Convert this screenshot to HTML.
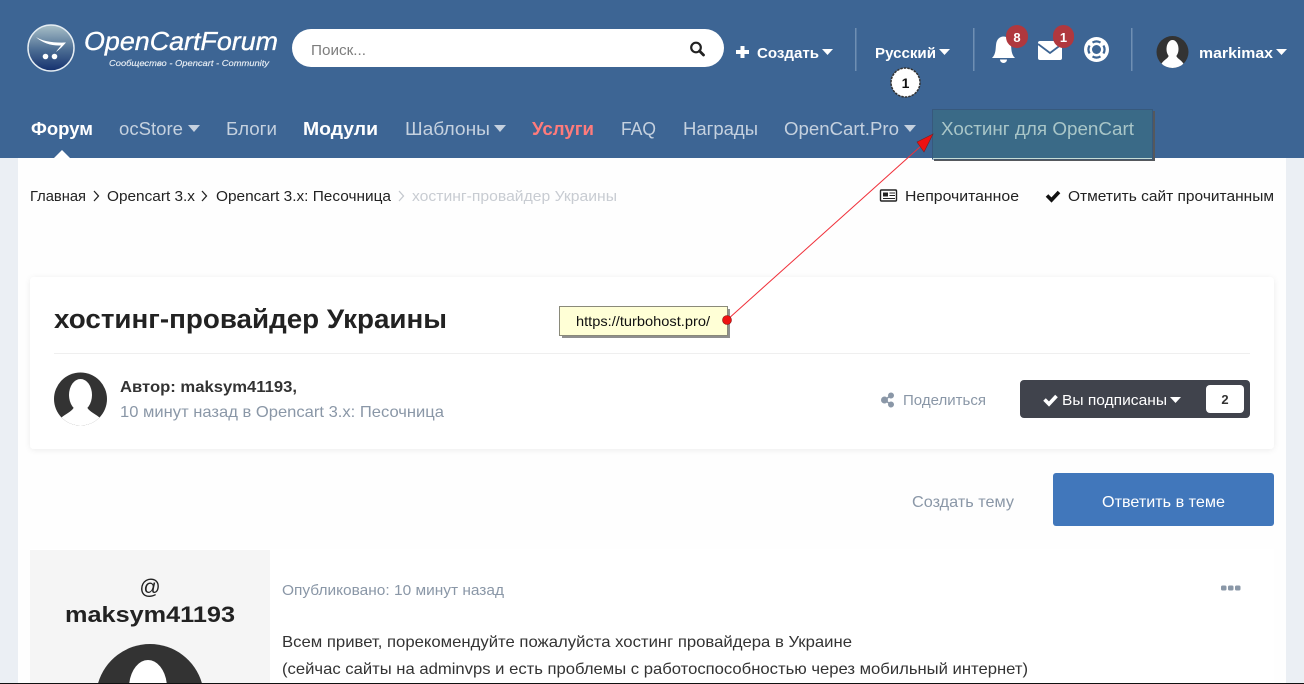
<!DOCTYPE html>
<html><head><meta charset="utf-8"><title>хостинг-провайдер Украины</title>
<style>
html,body{margin:0;padding:0;width:1304px;height:684px;overflow:hidden;background:#ebeff4}
svg{display:block}
text{font-family:"Liberation Sans","Noto Sans CJK SC",sans-serif}
</style></head><body>
<svg xmlns="http://www.w3.org/2000/svg" width="1304" height="684" viewBox="0 0 1304 684">
<defs>
<linearGradient id="g" x1="0" y1="0" x2="0" y2="1"><stop offset="0" stop-color="#a9c0c8"/><stop offset=".55" stop-color="#4a6b92"/><stop offset="1" stop-color="#14306e"/></linearGradient>
<filter id="s" x="-5%" y="-10%" width="110%" height="120%"><feDropShadow dx="0" dy="1" stdDeviation="3" flood-color="#000" flood-opacity=".07"/></filter>
<clipPath id="c1"><circle cx="80.500" cy="399" r="26.500"/></clipPath>
<clipPath id="c3"><circle cx="1172.500" cy="52" r="16"/></clipPath>
</defs>
<rect width="1304" height="684" fill="#ebeff4"/>
<rect x="18" y="158" width="1268" height="526" fill="#fefefe"/>
<rect y="0" width="1304" height="158" fill="#3d6594"/>

<!-- logo -->
<circle cx="51" cy="48" r="23" fill="url(#g)" stroke="#e4ecf2" stroke-width="1.500"/>
<path d="M36 37C42 41 52 43 66 42.500C63 46 60 49 56 52C58 49 60 47 61 45.500C52 46 42 43 36 37Z" fill="#fff"/>
<circle cx="45.500" cy="56.500" r="2.800" fill="#fff"/><circle cx="54.500" cy="56.500" r="2.800" fill="#fff"/>
<text x="84" y="50" font-size="26" font-style="italic" fill="#fff" stroke="#fff" stroke-width=".35" textLength="194" lengthAdjust="spacingAndGlyphs">OpenCartForum</text>
<text x="109" y="66" font-size="8.500" font-style="italic" fill="#e8eef4" stroke="#e8eef4" stroke-width=".15" textLength="160" lengthAdjust="spacingAndGlyphs">Сообщество - Opencart - Community</text>

<!-- search -->
<rect x="292" y="29" width="432" height="38" rx="19" fill="#fff"/>
<text x="311" y="55" font-size="15" fill="#7d7d7d" textLength="55" lengthAdjust="spacingAndGlyphs">Поиск...</text>
<circle cx="696" cy="47.500" r="4.800" fill="none" stroke="#222" stroke-width="2.200"/><path d="M699.500 51L703.500 55" stroke="#222" stroke-width="2.800" stroke-linecap="round"/>

<!-- top actions -->
<path d="M742.500 46V58M736 52H749" stroke="#fff" stroke-width="4"/>
<text x="757" y="58" font-size="15" font-weight="bold" fill="#fff" textLength="62" lengthAdjust="spacingAndGlyphs">Создать</text>
<path d="M822 49H833L827.500 55Z" fill="#fff"/>
<rect x="855" y="28" width="1.500" height="43" fill="#6f8fb3"/>
<text x="875" y="58" font-size="15" font-weight="bold" fill="#fff" textLength="61" lengthAdjust="spacingAndGlyphs">Русский</text>
<path d="M939 49H950L944.500 55Z" fill="#fff"/>
<rect x="973" y="28" width="1.500" height="43" fill="#6f8fb3"/>
<path d="M992 58C996 54 995.500 49 996 45C996.500 39 1000 36.500 1003.500 36.500C1007 36.500 1010.500 39 1011 45C1011.500 49 1011 54 1015 58Z" fill="#fff"/>
<path d="M1000 59.500a3.500 3.500 0 0 0 7 0Z" fill="#fff"/>
<rect x="1006" y="25" width="22" height="23" rx="11" fill="#b0383e"/>
<text x="1017" y="42" font-size="13" font-weight="bold" fill="#fff" text-anchor="middle">8</text>
<rect x="1038" y="41" width="24" height="19" rx="2" fill="#fff"/>
<path d="M1038 44L1050 53L1062 44" fill="none" stroke="#3d6594" stroke-width="1.800"/>
<rect x="1053" y="25" width="21" height="23" rx="10.500" fill="#b0383e"/>
<text x="1063.500" y="42" font-size="13" font-weight="bold" fill="#fff" text-anchor="middle">1</text>
<circle cx="1096.500" cy="49.500" r="12.500" fill="#fff"/>
<circle cx="1096.500" cy="49.500" r="4.500" fill="#3d6594"/>
<path d="M1092.500 42.570A8 8 0 0 1 1100.500 42.570M1103.430 45.500A8 8 0 0 1 1103.430 53.500M1100.500 56.430A8 8 0 0 1 1092.500 56.430M1089.570 53.500A8 8 0 0 1 1089.570 45.500" fill="none" stroke="#3d6594" stroke-width="2.200"/>
<rect x="1131" y="28" width="1.500" height="43" fill="#6f8fb3"/>
<circle cx="1172.500" cy="52" r="16" fill="#333"/>
<g clip-path="url(#c3)" fill="#fff"><ellipse cx="1172.500" cy="49" rx="6" ry="9"/><path d="M1160 70C1160 60 1168 60 1169 55H1176C1177 60 1185 60 1185 70Z"/></g>
<text x="1199" y="58" font-size="15" font-weight="bold" fill="#fff" textLength="74" lengthAdjust="spacingAndGlyphs">markimax</text>
<path d="M1276 49H1287L1281.500 55Z" fill="#fff"/>

<!-- step marker -->
<circle cx="905.500" cy="82.500" r="14.500" fill="#fff" stroke="#333" stroke-width="1.500" stroke-dasharray="2.500 1"/>
<text x="905.500" y="88" font-size="14" font-weight="bold" fill="#111" text-anchor="middle">1</text>

<!-- nav -->
<g font-size="18">
<text x="31" y="135" font-weight="bold" fill="#fff" textLength="62" lengthAdjust="spacingAndGlyphs">Форум</text>
<text x="119" y="135" fill="#c5d1df" textLength="64" lengthAdjust="spacingAndGlyphs">ocStore</text>
<path d="M188 125H200L194 132Z" fill="#c5d1df"/>
<text x="226" y="135" fill="#c5d1df" textLength="51" lengthAdjust="spacingAndGlyphs">Блоги</text>
<text x="303" y="135" font-weight="bold" fill="#fff" textLength="75" lengthAdjust="spacingAndGlyphs">Модули</text>
<text x="405" y="135" fill="#c5d1df" textLength="85" lengthAdjust="spacingAndGlyphs">Шаблоны</text>
<path d="M494 125H506L500 132Z" fill="#c5d1df"/>
<text x="532" y="135" font-weight="bold" fill="#ff7b7b" textLength="62" lengthAdjust="spacingAndGlyphs">Услуги</text>
<text x="621" y="135" fill="#c5d1df" textLength="35" lengthAdjust="spacingAndGlyphs">FAQ</text>
<text x="683" y="135" fill="#c5d1df" textLength="75" lengthAdjust="spacingAndGlyphs">Награды</text>
<text x="784" y="135" fill="#c5d1df" textLength="115" lengthAdjust="spacingAndGlyphs">OpenCart.Pro</text>
<path d="M904 125H916L910 132Z" fill="#c5d1df"/>
</g>
<path d="M54 158L62 150L70 158Z" fill="#fff"/>

<!-- highlighted hosting box -->
<rect x="934" y="111" width="221" height="50" fill="#55585c"/>
<rect x="932.500" y="109.500" width="220" height="49.500" fill="#3a6a87" stroke="#37597d"/>
<rect x="933" y="158" width="219" height="1" fill="#c5dcd6"/>
<text x="941" y="135" font-size="18" fill="#a9c6c8" textLength="193" lengthAdjust="spacingAndGlyphs">Хостинг для OpenCart</text>

<!-- breadcrumb -->
<g font-size="15">
<text x="30" y="201" fill="#222" textLength="56" lengthAdjust="spacingAndGlyphs">Главная</text>
<path d="M94 191L98.500 196L94 201" fill="none" stroke="#222" stroke-width="1.300"/>
<text x="107" y="201" fill="#222" textLength="88" lengthAdjust="spacingAndGlyphs">Opencart 3.x</text>
<path d="M202 191L206.500 196L202 201" fill="none" stroke="#222" stroke-width="1.300"/>
<text x="216" y="201" fill="#222" textLength="175" lengthAdjust="spacingAndGlyphs">Opencart 3.x: Песочница</text>
<path d="M399 191L403.500 196L399 201" fill="none" stroke="#c4c8ce" stroke-width="1.300"/>
<text x="412" y="201" fill="#c8ccd2" textLength="205" lengthAdjust="spacingAndGlyphs">хостинг-провайдер Украины</text>
<text x="905" y="201" fill="#222" textLength="114" lengthAdjust="spacingAndGlyphs">Непрочитанное</text>
<text x="1068" y="201" fill="#222" textLength="206" lengthAdjust="spacingAndGlyphs">Отметить сайт прочитанным</text>
</g>
<rect x="880.500" y="190" width="16" height="11" rx="1" fill="none" stroke="#222" stroke-width="1.400"/>
<rect x="883" y="192.500" width="5" height="4" fill="#222"/><path d="M889.500 193H895M889.500 195.500H895M883 198.500H895" stroke="#222"/>
<path d="M1047 195.500L1051.500 200L1059 192" fill="none" stroke="#111" stroke-width="3.600"/>

<!-- title card -->
<rect x="30" y="277" width="1244" height="172" rx="4" fill="#fff" filter="url(#s)"/>
<text x="54" y="328" font-size="27" font-weight="bold" fill="#222" textLength="393" lengthAdjust="spacingAndGlyphs">хостинг-провайдер Украины</text>
<rect x="54" y="353" width="1196" height="1" fill="#efefef"/>
<circle cx="80.500" cy="399" r="26.500" fill="#333"/>
<g clip-path="url(#c1)" fill="#fff"><ellipse cx="80.500" cy="395" rx="11.500" ry="16"/><path d="M56 428C56 415 72 415 75 405H86C89 415 105 415 105 428Z"/></g>
<text x="120" y="392" font-size="16" font-weight="bold" fill="#333" textLength="177" lengthAdjust="spacingAndGlyphs">Автор: maksym41193,</text>
<text x="120" y="417" font-size="16" fill="#8a97a7" textLength="324" lengthAdjust="spacingAndGlyphs">10 минут назад в Opencart 3.x: Песочница</text>
<g fill="#8a97a7"><circle cx="884.500" cy="400" r="3.500"/><circle cx="891" cy="395.500" r="3"/><circle cx="891" cy="404.500" r="3"/></g>
<path d="M884.500 400L891 395.500M884.500 400L891 404.500" stroke="#8a97a7" stroke-width="1.500"/>
<text x="903" y="405" font-size="15" fill="#8a97a7" textLength="83" lengthAdjust="spacingAndGlyphs">Поделиться</text>
<rect x="1020" y="380" width="230" height="38" rx="4" fill="#40434c"/>
<path d="M1044.500 399.500L1049 404L1056.500 396" fill="none" stroke="#fff" stroke-width="3.600"/>
<text x="1062" y="405" font-size="15" fill="#fff" textLength="105" lengthAdjust="spacingAndGlyphs">Вы подписаны</text>
<path d="M1170 397H1181L1175.500 403Z" fill="#fff"/>
<rect x="1206" y="385" width="38" height="28" rx="4" fill="#fff"/>
<text x="1225" y="404" font-size="13" font-weight="bold" fill="#333" text-anchor="middle">2</text>

<!-- actions -->
<text x="912" y="507" font-size="16" fill="#8a97a7" textLength="102" lengthAdjust="spacingAndGlyphs">Создать тему</text>
<rect x="1053" y="473" width="221" height="53" rx="3" fill="#4177bb"/>
<text x="1102" y="507" font-size="16" fill="#fff" textLength="123" lengthAdjust="spacingAndGlyphs">Ответить в теме</text>

<!-- post -->
<rect x="30" y="549" width="1244" height="134" fill="#fff"/>
<rect x="30" y="550" width="240" height="133" fill="#f5f5f5"/>
<text x="150" y="594" font-size="21" fill="#222" text-anchor="middle">@</text>
<text x="150" y="622" font-size="22" font-weight="bold" fill="#222" text-anchor="middle" textLength="170" lengthAdjust="spacingAndGlyphs">maksym41193</text>
<path d="M98.130 683A54 54 0 0 1 201.870 683Z" fill="#333"/>
<path d="M129.300 683A19 28 0 0 1 166.700 683Z" fill="#fff"/>
<text x="282" y="595" font-size="15" fill="#8a97a7" textLength="222" lengthAdjust="spacingAndGlyphs">Опубликовано: 10 минут назад</text>
<g fill="#8a97a7"><rect x="1221" y="585.500" width="5.500" height="5" rx="1.500"/><rect x="1228" y="585.500" width="5.500" height="5" rx="1.500"/><rect x="1235" y="585.500" width="5.500" height="5" rx="1.500"/></g>
<text x="282" y="647" font-size="16" fill="#333" textLength="570" lengthAdjust="spacingAndGlyphs">Всем привет, порекомендуйте пожалуйста хостинг провайдера в Украине</text>
<text x="282" y="674" font-size="16" fill="#333" textLength="746" lengthAdjust="spacingAndGlyphs">(сейчас сайты на adminvps и есть проблемы с работоспособностью через мобильный интернет)</text>
<rect x="0" y="683" width="1304" height="1" fill="#111"/>

<!-- annotation -->
<rect x="562" y="309" width="168" height="29" fill="#8f8f8f"/>
<rect x="559.500" y="306.500" width="168" height="29" fill="#ffffd6" stroke="#8a8a7a"/>
<text x="576" y="326" font-size="14" fill="#111" textLength="134" lengthAdjust="spacingAndGlyphs">https://turbohost.pro/</text>
<path d="M727 320L921 146" stroke="#f0303a" stroke-width="1"/>
<path d="M933 134L917 142L924 152Z" fill="#ee1111" stroke="#7a2020" stroke-width=".6"/>
<circle cx="727" cy="320" r="4.500" fill="#ee1111" stroke="#8a1010" stroke-width=".6"/>
</svg>
</body></html>
